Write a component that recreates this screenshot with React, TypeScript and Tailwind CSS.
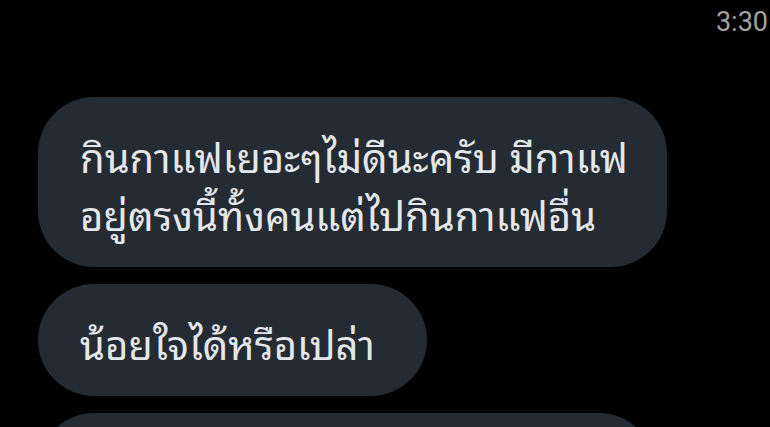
import React from 'react';

interface Message {
    text: string[];
    width: string;
}

const messages: Message[] = [
    { text: ['กินกาแฟเยอะๆไม่ดีนะครับ มีกาแฟ', 'อยู่ตรงนี้ทั้งคนแต่ไปกินกาแฟอื่น'], width: 'w-[629px]' },
    { text: ['น้อยใจได้หรือเปล่า'], width: 'w-[389px]' },
];

const App: React.FC = () => {
    return (
        <div className='w-[770px] h-[427px] bg-black overflow-hidden font-["Noto_Sans_Thai_Looped","Loma","Garuda","Sarabun","Noto_Sans_Thai",sans-serif]'>
            {/* status row */}
            <div className='flex justify-end pr-[2px] pt-[4px] h-[97px]'>
                <span className='text-[27px] leading-[36px] text-[#a0a0a0] font-["Roboto",sans-serif]'>3:30</span>
            </div>

            <div className='flex flex-col gap-[17px] pl-[38px]'>
                {messages.map((msg, index) => (
                    <div key={index} className={`${msg.width} bg-[#242b32] rounded-[56px] px-[42px] pt-[29px] pb-[25px] text-[#e4e7ea] text-[40px] leading-[58px]`}>
                        {msg.text.map((line, i) => (
                            <div key={i} className='whitespace-nowrap'>{line}</div>
                        ))}
                    </div>
                ))}
                <div className='w-[617px] h-[112px] bg-[#242b32] rounded-[56px]'></div>
            </div>
        </div>
    );
};

export default App;
